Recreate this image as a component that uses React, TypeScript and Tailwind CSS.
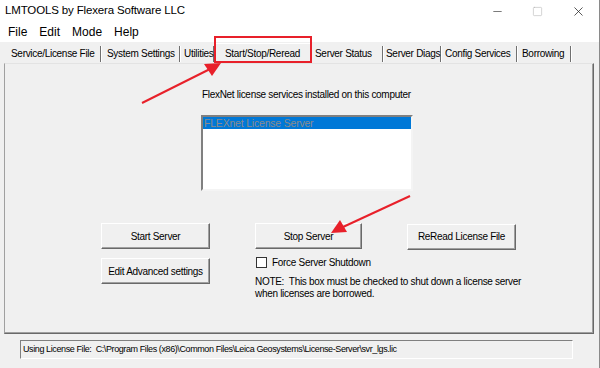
import { Minus, Square, X } from "lucide-react";

const tabs = [
  { label: "Service/License File", w: "w-[95px]", pl: "pl-[5px]" },
  { label: "System Settings", w: "w-[79px]", pl: "pl-[6px]" },
  { label: "Utilities", w: "w-[34px]", pl: "pl-[4px]" },
  { label: "Start/Stop/Reread", w: "w-[98px]", pl: "pl-[10px]" },
  { label: "Server Status", w: "w-[71px]", pl: "pl-[3px]" },
  { label: "Server Diags", w: "w-[58px]", pl: "pl-[3px]" },
  { label: "Config Services", w: "w-[76px]", pl: "pl-[4px]" },
  { label: "Borrowing", w: "w-[54px]", pl: "pl-[5px]" },
];

const ACTIVE = "Start/Stop/Reread";

function WinButton({ label }: { label: string }) {
  return (
    <button className="h-[26px] w-full whitespace-nowrap border border-t-white border-l-white border-b-[#696969] border-r-[#696969] bg-[#f0f0f0] text-[10px] tracking-[-0.3px] text-black shadow-[inset_-1px_-1px_0_#a0a0a0]">
      {label}
    </button>
  );
}

export default function App() {
  return (
    <div
      className="relative h-[368px] w-[600px] overflow-hidden border-r border-[#8a8a8a] bg-[#f0f0f0] text-black"
      style={{ fontFamily: '"Liberation Sans", Arial, sans-serif' }}
    >
      {/* Title bar */}
      <div className="flex h-[22px] items-center justify-between bg-white pl-[5px]">
        <span className="whitespace-nowrap text-[11.5px] tracking-[-0.15px]">
          LMTOOLS by Flexera Software LLC
        </span>
        <div className="flex h-full items-center">
          <div className="flex w-[40px] justify-center text-[#333]">
            <Minus size={13} strokeWidth={1.2} />
          </div>
          <div className="flex w-[40px] justify-center text-[#b0b0b0]">
            <Square size={11} strokeWidth={1.2} />
          </div>
          <div className="flex w-[42px] justify-center text-[#222]">
            <X size={15} strokeWidth={1.2} />
          </div>
        </div>
      </div>

      {/* Menu bar */}
      <div className="flex h-[20px] items-center gap-[12px] bg-white pl-[8px] text-[12px]">
        <span>File</span>
        <span>Edit</span>
        <span>Mode</span>
        <span>Help</span>
      </div>

      {/* Tabs */}
      <div className="flex h-[21px] items-end pl-[6px] text-[10px] tracking-[-0.3px]">
        {tabs.map((t) =>
          t.label === ACTIVE ? (
            <div
              key={t.label}
              className={`flex h-[20px] shrink-0 items-center whitespace-nowrap border border-b-0 border-t-white border-l-white border-r-[#a0a0a0] ${t.w} ${t.pl}`}
            >
              {t.label}
            </div>
          ) : (
            <div key={t.label} className={`flex h-[19px] shrink-0 items-center ${t.w}`}>
              <div
                className={`flex h-[16px] w-full items-center whitespace-nowrap border-r border-[#707070] shadow-[1px_0_0_#ffffff] ${t.pl}`}
              >
                {t.label}
              </div>
            </div>
          )
        )}
      </div>

      {/* Tab panel */}
      <div className="mx-[4px] h-[271px] w-[590px] border border-t-[#e3e3e3] border-l-[#a0a0a0] border-b-[#696969] border-r-[#696969] shadow-[inset_-1px_-1px_0_#a0a0a0]">
        <div className="ml-[197px] mt-[23px] whitespace-nowrap text-[10px] tracking-[-0.3px]">
          FlexNet license services installed on this computer
        </div>
        <div className="ml-[196px] mt-[13px] h-[76px] w-[212px] border-[2px] border-t-[#808080] border-l-[#808080] border-b-[#f4f4f4] border-r-[#f4f4f4] bg-white">
          <div className="h-[12px] whitespace-nowrap bg-[#0078d7] pl-[1px] text-[10.5px] leading-[12px] tracking-[-0.2px] text-[#8b8b8b]">
            FLEXnet License Server
          </div>
        </div>

        <div className="ml-[96px] mt-[32px] grid grid-cols-[109px_107px_109px] gap-x-[45px]">
          <div className="flex flex-col gap-[9px]">
            <WinButton label="Start Server" />
            <WinButton label="Edit Advanced settings" />
          </div>
          <div className="flex flex-col">
            <WinButton label="Stop Server" />
            <label className="ml-[1px] mt-[6px] flex items-center gap-[5px] whitespace-nowrap text-[10px] tracking-[-0.3px]">
              <span className="h-[11px] w-[11px] shrink-0 border border-[#333] bg-white" />
              Force Server Shutdown
            </label>
            <p className="mt-[6px] w-[300px] whitespace-nowrap text-[10px] leading-[12px] tracking-[-0.3px]">
              NOTE:&nbsp; This box must be checked to shut down a license server
              <br />
              when licenses are borrowed.
            </p>
          </div>
          <div>
            <WinButton label="ReRead License File" />
          </div>
        </div>
      </div>

      {/* Status bar */}
      <div className="ml-[20px] mt-[6px] flex h-[19px] w-[553px] items-center whitespace-nowrap border border-t-[#808080] border-l-[#808080] border-b-white border-r-white pl-[2px] text-[9px] tracking-[-0.4px]">
        Using License File:&nbsp; C:\Program Files (x86)\Common Files\Leica Geosystems\License-Server\svr_lgs.lic
      </div>

      {/* Annotations */}
      <div className="pointer-events-none absolute left-[214px] top-[36px] h-[27px] w-[98px] border-2 border-[#e8202a]" />
      <svg
        className="pointer-events-none absolute left-0 top-0"
        width="600"
        height="368"
        viewBox="0 0 600 368"
      >
        <line x1="142" y1="103" x2="210" y2="69" stroke="#e8202a" strokeWidth="2" />
        <polygon points="221,63 204,64 212,76" fill="#e8202a" />
        <line x1="410" y1="196" x2="343" y2="227" stroke="#e8202a" strokeWidth="2" />
        <polygon points="331,233 340,220 347,232" fill="#e8202a" />
      </svg>
    </div>
  );
}
